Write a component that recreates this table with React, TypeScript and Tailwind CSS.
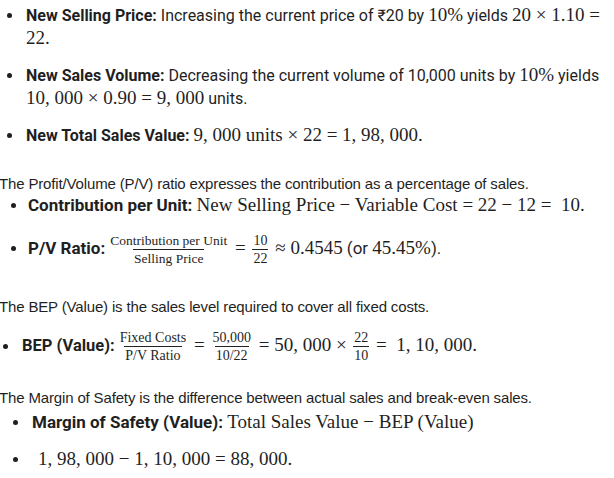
import React from 'react';

const serif = "font-['Liberation_Serif',serif] text-[19px] leading-none";

const Frac = ({ num, den, size = 'text-[14px]' }: { num: string; den: string; size?: string }) => (
  <span className={`inline-flex flex-col items-center align-middle mx-[2px] font-['Liberation_Serif',serif] ${size} leading-[15px]`}>
    <span className="px-px pb-px">{num}</span>
    <span className="px-px border-t border-[#222] pt-px">{den}</span>
  </span>
);

const Bullet = ({ className = '' }: { className?: string }) => (
  <span className={`absolute w-[5px] h-[5px] rounded-full bg-[#1f1f1f] ${className}`} />
);

export default function App() {
  return (
    <div className="w-[614px] h-[478px] overflow-hidden bg-white text-[#1f1f1f] font-['Roboto',sans-serif] text-[16px] leading-[23px]">
      {/* Changes in price and volume */}
      <ul className="pt-1">
        <li className="relative pl-[26px] mb-3.5 whitespace-nowrap">
          <Bullet className="left-[7px] top-[9px]" />
          <b className="font-bold">New Selling Price:</b> Increasing the current price of ₹20 by <span className={serif}>10%</span> yields <span className={serif}>20 × 1.10 =</span>
          <br />
          <span className={serif}>22.</span>
        </li>
        <li className="relative pl-[26px] mb-3.5 whitespace-nowrap">
          <Bullet className="left-[7px] top-[9px]" />
          <b className="font-bold">New Sales Volume:</b> Decreasing the current volume of 10,000 units by <span className={serif}>10%</span> yields
          <br />
          <span className={serif}>10, 000 × 0.90 = 9, 000</span> units.
        </li>
        <li className="relative pl-[26px] whitespace-nowrap">
          <Bullet className="left-[7px] top-[9px]" />
          <b className="font-bold">New Total Sales Value:</b> <span className={serif}>9, 000 units × 22 = 1, 98, 000.</span>
        </li>
      </ul>

      {/* P/V ratio */}
      <p className="mt-[27px] -ml-px font-['Liberation_Sans',sans-serif] text-[15px] leading-[20px] tracking-[-0.15px]">
        The Profit/Volume (P/V) ratio expresses the contribution as a percentage of sales.
      </p>
      <ul className="text-[17px]">
        <li className="relative pl-[28px] mb-[13px] whitespace-nowrap">
          <Bullet className="left-[11px] top-[9px]" />
          <b className="font-bold">Contribution per Unit:</b> <span className={serif}>New Selling Price − Variable Cost = 22 − 12 =&nbsp; 10.</span>
        </li>
        <li className="relative pl-[28px] leading-[36px] whitespace-nowrap">
          <Bullet className="left-[11px] top-[16px]" />
          <b className="font-bold">P/V Ratio:</b>
          <Frac num="Contribution per Unit" den="Selling Price" size="text-[13.5px] ml-[4px]" />
          <span className={serif}> = </span>
          <Frac num="10" den="22" />
          <span className={serif}> ≈ 0.4545</span> (or <span className={serif}>45.45%</span>).
        </li>
      </ul>

      {/* BEP */}
      <p className="mt-[31px] -ml-px font-['Liberation_Sans',sans-serif] text-[15px] leading-[20px] tracking-[-0.15px]">
        The BEP (Value) is the sales level required to cover all fixed costs.
      </p>
      <ul className="mt-[11px]">
        <li className="relative pl-[22px] leading-[36px] text-[16.5px] whitespace-nowrap">
          <Bullet className="left-[3px] top-[16px]" />
          <b className="font-bold">BEP (Value):</b>
          <Frac num="Fixed Costs" den="P/V Ratio" size="text-[14px] ml-[4px]" />
          <span className={serif}> = </span>
          <Frac num="50,000" den="10/22" />
          <span className={serif}> = 50, 000 × </span>
          <Frac num="22" den="10" />
          <span className={serif}> =&nbsp; 1, 10, 000.</span>
        </li>
      </ul>

      {/* Margin of safety */}
      <p className="mt-[24px] -ml-px font-['Liberation_Sans',sans-serif] text-[15px] leading-[20px] tracking-[-0.15px]">
        The Margin of Safety is the difference between actual sales and break-even sales.
      </p>
      <ul className="mt-[3px] text-[17px]">
        <li className="relative pl-[32px] mb-[14px] whitespace-nowrap">
          <Bullet className="left-[13px] top-[9px]" />
          <b className="font-bold">Margin of Safety (Value):</b> <span className={serif}>Total Sales Value − BEP (Value)</span>
        </li>
        <li className="relative pl-[38px] whitespace-nowrap">
          <Bullet className="left-[13px] top-[9px]" />
          <span className={serif}>1, 98, 000 − 1, 10, 000 = 88, 000.</span>
        </li>
      </ul>
    </div>
  );
}
